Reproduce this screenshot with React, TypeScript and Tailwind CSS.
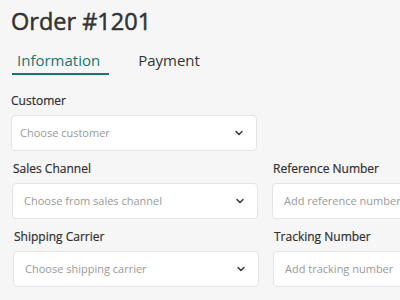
import { ChevronDown } from "lucide-react";

function SelectBox({ placeholder, inset }: { placeholder: string; inset: string }) {
  return (
    <div
      className={`flex h-[36px] items-center justify-between rounded-[4px] border border-[#e4e4e4] bg-white ${inset} pr-[11px]`}
    >
      <span className="text-[11px] text-[#999]">{placeholder}</span>
      <ChevronDown className="h-[12px] w-[12px] text-[#3a3a3a]" strokeWidth={3} />
    </div>
  );
}

function InputBox({ placeholder }: { placeholder: string }) {
  return (
    <div className="flex h-[36px] items-center rounded-[4px] border border-[#e4e4e4] bg-white pl-[11px]">
      <span className="whitespace-nowrap text-[11px] text-[#999]">{placeholder}</span>
    </div>
  );
}

function Label({ children }: { children: string }) {
  return (
    <div className="mb-[6px] h-[16px] text-[12px] leading-[16px] text-[#2f2f2f] [-webkit-text-stroke:0.2px_#2f2f2f]">
      {children}
    </div>
  );
}

export default function App() {
  return (
    <div
      className="h-[300px] w-[400px] overflow-hidden bg-[#f6f6f6] pl-[11px] pt-[5px]"
      style={{ fontFamily: '"Open Sans", sans-serif' }}
    >
      <h1 className="h-[32px] text-[23.5px] font-normal leading-[32px] text-[#333] [-webkit-text-stroke:0.5px_#333]">
        Order #1201
      </h1>

      <div className="mt-[13px] flex items-end gap-[24px] pl-[1px]">
        <button className="border-b-2 border-[#16786a] pb-[3px] pl-[5px] pr-[9px] text-[15px] leading-[20px] text-[#16786a]">
          Information
        </button>
        <button className="pb-[5px] pl-[5px] text-[15px] leading-[20px] text-[#333]">Payment</button>
      </div>

      <div className="mt-[18px] flex w-[560px] flex-col gap-[10px]">
        <div className="w-[246px]">
          <Label>Customer</Label>
          <SelectBox placeholder="Choose customer" inset="pl-[8px]" />
        </div>

        <div className="ml-[1px] grid grid-cols-[246px_246px] gap-x-[14px]">
          <div>
            <div className="pl-[1px]">
              <Label>Sales Channel</Label>
            </div>
            <SelectBox placeholder="Choose from sales channel" inset="pl-[11px]" />
          </div>
          <div>
            <div className="pl-[1px]">
              <Label>Reference Number</Label>
            </div>
            <InputBox placeholder="Add reference number" />
          </div>
        </div>

        <div className="ml-[2px] grid grid-cols-[246px_246px] gap-x-[14px]">
          <div>
            <div className="pl-[1px]">
              <Label>Shipping Carrier</Label>
            </div>
            <SelectBox placeholder="Choose shipping carrier" inset="pl-[11px]" />
          </div>
          <div>
            <div className="pl-[1px]">
              <Label>Tracking Number</Label>
            </div>
            <InputBox placeholder="Add tracking number" />
          </div>
        </div>
      </div>
    </div>
  );
}
